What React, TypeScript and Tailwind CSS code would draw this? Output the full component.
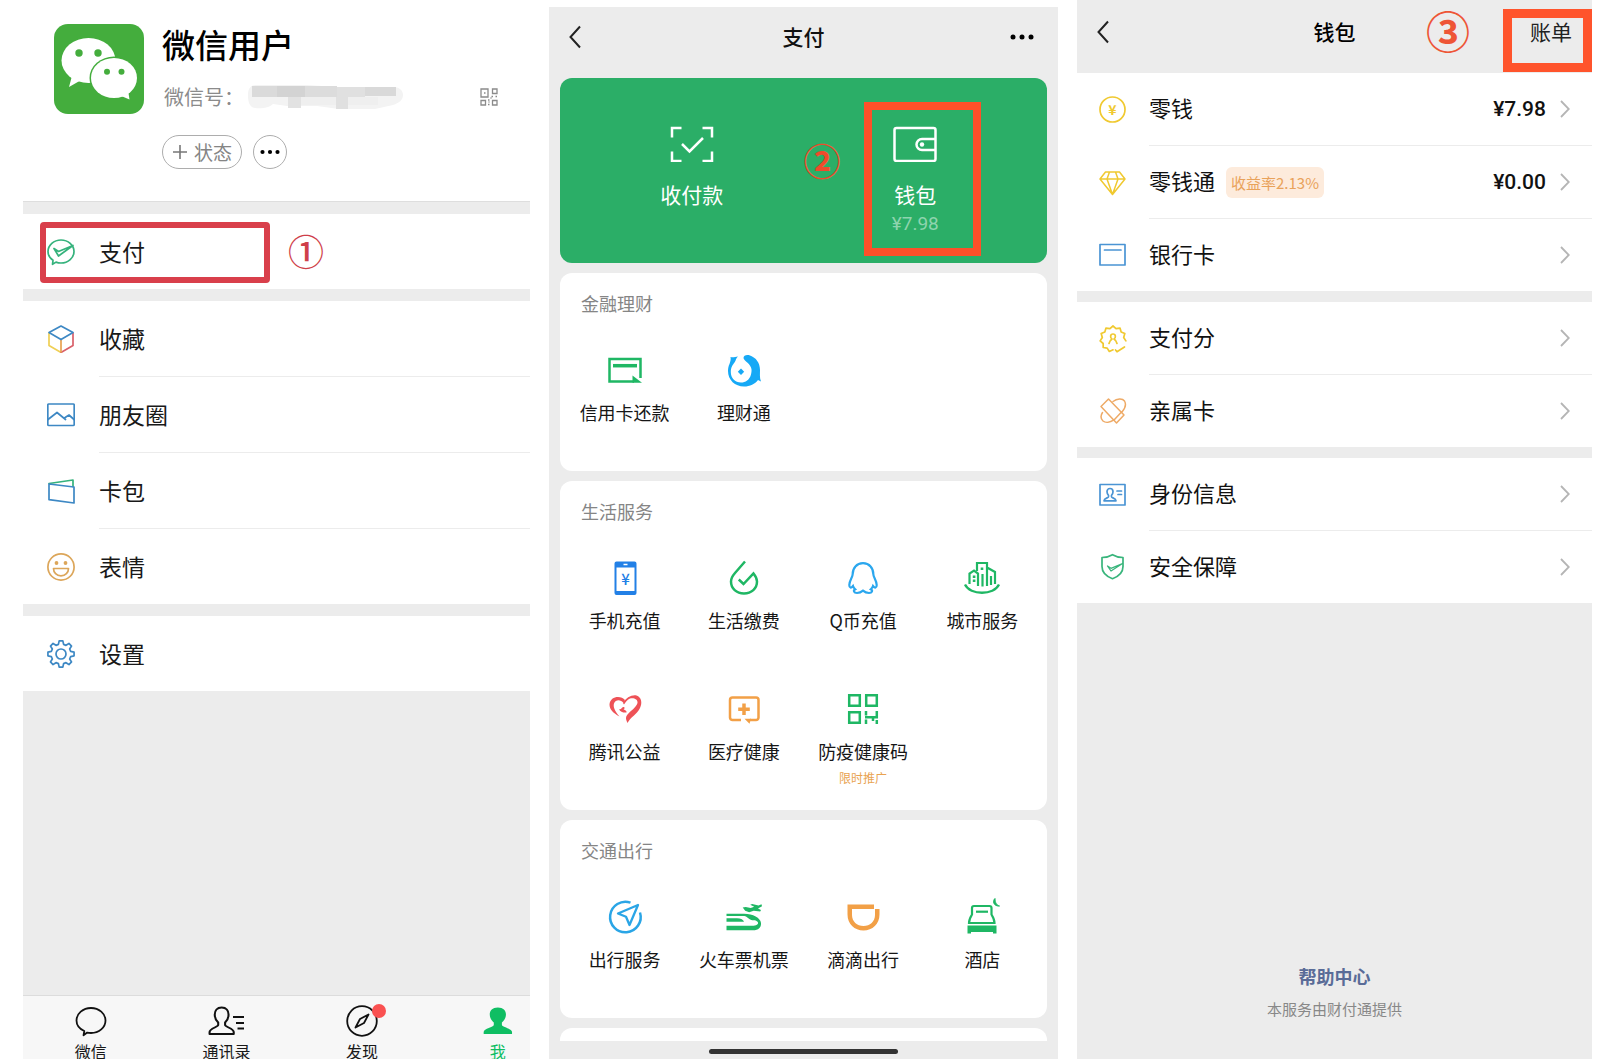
import type { ReactNode } from "react";
import clsx from "clsx";

type IconProps = { children: ReactNode; color?: string; width?: number };

const GREEN = "#1fb764";
const BLUE = "#3d88c4";
const YELLOW = "#f0c930";
const ORANGE = "#f2a047";

// outline icon on a 28px grid, used by the list rows
const RowIcon = ({ children, color = BLUE, width = 1.7 }: IconProps) => (
  <svg
    className="size-7 shrink-0"
    viewBox="0 0 28 28"
    fill="none"
    stroke={color}
    strokeWidth={width}
    strokeLinejoin="round"
    strokeLinecap="round"
    aria-hidden="true"
  >
    {children}
  </svg>
);

// icon on a 40px grid, used by the service tiles
const TileIcon = ({ children, color = GREEN, width = 2.5 }: IconProps) => (
  <svg
    className="size-10 shrink-0"
    viewBox="0 0 40 40"
    fill="none"
    stroke={color}
    strokeWidth={width}
    aria-hidden="true"
  >
    {children}
  </svg>
);

const polar = (r: number, deg: number) => {
  const a = ((deg - 90) * Math.PI) / 180;
  return `${(14 + r * Math.cos(a)).toFixed(2)} ${(14 + r * Math.sin(a)).toFixed(2)}`;
};

const gearPath =
  Array.from({ length: 8 }, (_, i) => {
    const d = i * 45;
    return [polar(10, d - 15), polar(13.2, d - 8), polar(13.2, d + 8), polar(10, d + 15)]
      .map((p, j) => (i === 0 && j === 0 ? `M${p}` : `L${p}`))
      .join(" ");
  }).join(" ") + "Z";

// open seal: the gap at the lower right is closed by a tick
const sealPath = Array.from({ length: 18 }, (_, i) => polar(i % 2 ? 13 : 10.8, 180 + i * 16.36))
  .map((p, i) => (i ? `L${p}` : `M${p}`))
  .join(" ");

const PERSON =
  "M11 2.500c-4 0-6 3-6 7 0 3.500 1.500 6.500 3 8v2.500c0 2-7.500 3.500-7.500 7V29h21v-2c0-3.500-7.500-5-7.500-7v-2.500c1.500-1.500 3-4.500 3-8 0-4-2-7-6-7z";

const WechatLogo = () => (
  <svg className="size-[90px] shrink-0" viewBox="0 0 90 90" aria-hidden="true">
    <rect width="90" height="90" rx="14" fill="#44ad3d" />
    <path d="M18.500 50 15 63l10.500-6z" fill="#fff" />
    <ellipse cx="34.500" cy="36.500" rx="27" ry="22.500" fill="#fff" />
    <ellipse cx="60" cy="54" rx="24.500" ry="21.500" fill="#44ad3d" />
    <path d="M74 66l1.500 9.500-9.500-4z" fill="#fff" />
    <ellipse cx="60" cy="54" rx="23" ry="20" fill="#fff" />
    <g fill="#44ad3d">
      <circle cx="25" cy="29" r="3.700" />
      <circle cx="44" cy="29" r="3.700" />
      <circle cx="53" cy="47.700" r="3" />
      <circle cx="67.500" cy="47.700" r="3" />
    </g>
  </svg>
);

const MaskedId = () => (
  <svg className="ml-[3px] h-[26px] w-[157px]" viewBox="0 0 157 26" aria-hidden="true">
    <path
      d="M1 11C1 4 4 1 9 1H60l30 2h56c6 0 10 3 10 8s-4 8-10 10l-18 4H92l-22-3H40l-14-2c-4 4-12 5-18 4S1 17 1 11z"
      fill="#f3f3f3"
    />
    <path d="M5 2h25v11H5z" fill="#dadada" />
    <path d="M30 2h28v11H30z" fill="#d3d3d3" />
    <path d="M58 2h32v11H58z" fill="#dcdcdc" />
    <path d="M90 3h28v10H90z" fill="#e0e0e0" />
    <path d="M118 3h31v9h-31z" fill="#d9d9d9" />
    <path d="M41 13h13v11H41z" fill="#e2e2e2" />
    <path d="M89 13h12v12H89z" fill="#e0e0e0" />
    <path d="M54 13h35v8H54zM101 13h30v8h-30z" fill="#efefef" />
  </svg>
);

const Back = () => (
  <button type="button" aria-label="返回" className="justify-self-start">
    <svg className="h-6 w-3" viewBox="0 0 12 24" fill="none" stroke="#222" strokeWidth="2" aria-hidden="true">
      <path d="M11 1.500 1.500 12 11 22.500" />
    </svg>
  </button>
);

const Dots = ({ size }: { size: number }) => (
  <svg width={size} height="6" viewBox="0 0 24 6" fill="#000" aria-hidden="true">
    <circle cx="3" cy="3" r="2.500" />
    <circle cx="12" cy="3" r="2.500" />
    <circle cx="21" cy="3" r="2.500" />
  </svg>
);

const ME_GROUPS = [
  [
    {
      title: "支付",
      step: true,
      icon: (
        <RowIcon color="#35b27c">
          <path d="M5.500 26.300l.5-4C3 20.200 1 17 1 13.500 1 7.200 6.800 2 14 2s13 5.200 13 11.500S21.200 25 14 25c-1.800 0-3.500-.3-5-.9z" />
          <path d="M7 10.500l4.500 3L26 7.500 11.500 18z" />
        </RowIcon>
      ),
    },
  ],
  [
    {
      title: "收藏",
      icon: (
        <RowIcon>
          <path d="M2 8v12.500l12 7" stroke="#efcf55" />
          <path d="M26 8v12.500l-12 7" stroke="#d9606a" />
          <path d="M14 15v12" stroke="#e8a150" />
          <path d="M14 1l12 6.500L14 14.500 2 7.500z" />
        </RowIcon>
      ),
    },
    {
      title: "朋友圈",
      icon: (
        <RowIcon>
          <rect x="0.800" y="3" width="26.400" height="21.500" rx="1" />
          <path d="M1 18.500l9-7 8.500 7-1.500-1.200 5-3.300 5 4.500" />
        </RowIcon>
      ),
    },
    {
      title: "卡包",
      icon: (
        <RowIcon>
          <path d="M2 6.500L26 3v6.500" stroke="#35b27c" />
          <path d="M2 7l25 3v16L2 22.700z" />
        </RowIcon>
      ),
    },
    {
      title: "表情",
      icon: (
        <RowIcon color="#dca65a">
          <circle cx="14" cy="14" r="13.100" />
          <path d="M6.500 15.500h15c0 4-3 7.300-7.500 7.300s-7.500-3.300-7.500-7.300z" />
          <g fill="#dca65a" stroke="none">
            <circle cx="9.500" cy="10" r="1.900" />
            <circle cx="18.500" cy="10" r="1.900" />
          </g>
        </RowIcon>
      ),
    },
  ],
  [
    {
      title: "设置",
      icon: (
        <RowIcon>
          <path d={gearPath} />
          <circle cx="14" cy="14" r="5" />
        </RowIcon>
      ),
    },
  ],
];

const TABS = [
  {
    title: "微信",
    icon: (
      <path
        d="M8.500 30.300l.8-4.300C4.300 23.800 1.500 20 1.500 15.500 1.500 8.500 8 3 16 3s14.500 5.500 14.500 12.500S24 28 16 28c-1.500 0-2.500-.1-3.800-.4z"
        fill="none"
        stroke="#111"
        strokeWidth="1.800"
        strokeLinejoin="round"
      />
    ),
  },
  {
    title: "通讯录",
    icon: (
      <g fill="none" stroke="#111" strokeWidth="1.800" strokeLinejoin="round">
        <path d={PERSON} transform="translate(-1 0) scale(1.150 1)" />
        <path d="M23 12h11M26 18h8M27.500 23.500H34" />
      </g>
    ),
  },
  {
    title: "发现",
    icon: (
      <g fill="none" stroke="#111" strokeWidth="1.800" strokeLinejoin="round">
        <circle cx="16" cy="16" r="14.800" />
        <path d="M22.500 9.500L18 18l-8.500 4.500L14 14z" />
      </g>
    ),
    dot: true,
  },
  {
    title: "我",
    active: true,
    icon: <path d={PERSON} transform="translate(1 0) scale(1.350 1)" fill="#0fbe63" />,
  },
];

const FINANCE = [
  {
    title: "信用卡还款",
    icon: (
      <TileIcon>
        <path d="M35.500 28V9H4.500v22.500H29" />
        <path d="M8 15.700h24" strokeWidth="3.500" />
        <path d="M27.500 25.500l9.500 7.200h-9.500z" fill={GREEN} stroke="none" />
      </TileIcon>
    ),
  },
  {
    title: "理财通",
    icon: (
      <TileIcon>
        <g fill="#16a9f6" stroke="none">
          <path d="M14 6.500C11 7 9 7.500 6.500 7c.5 2.500 0 4-1 7C4.500 16 4 18 4 21c0 9 7 15.500 16 15.500 6 0 11-2.500 14-6.500l3 1.500c-1.500-3.500-1-7.500-1-11.500 0-7-4-12.500-10-14.500-3.500-1-6.500 0-6.500 2.500.5 3 5.500 4.500 7.500 9.500 1 2.500.5 4.500 0 7-1.500 5.500-5.500 8-10 8C11 32.500 6.800 28 6.800 22c0-5 2.200-7.500 3.700-9.500S12 8 14 6.500z" />
          <path d="M17 18.500l3.200 3.200-3.200 3.200-3.200-3.200z" />
        </g>
      </TileIcon>
    ),
  },
];

const LIFE = [
  {
    title: "手机充值",
    icon: (
      <TileIcon color="#2280e6">
        <path
          d="M11.500 3.500h18a2 2 0 0 1 2 2v29.500a2 2 0 0 1-2 2h-18a2 2 0 0 1-2-2V5.500a2 2 0 0 1 2-2zM11.500 9.500v23.500h18V9.500z"
          fill="#2280e6"
          fillRule="evenodd"
          stroke="none"
        />
        <path d="M18.500 6.500h4" stroke="#fff" strokeWidth="1.500" />
        <text x="20.500" y="26.500" textAnchor="middle" fontSize="15" fontWeight="500" fill="#2280e6" stroke="none">
          ¥
        </text>
      </TileIcon>
    ),
  },
  {
    title: "生活缴费",
    icon: (
      <TileIcon>
        <path d="M21 3.500L11 15c-3 3.500-4 6-4 8.500 0 7 5.500 12 13 12s13-5 13-12c0-3-1.500-5.500-3.500-8l-10 10.500-4.700-4.500" />
      </TileIcon>
    ),
  },
  {
    title: "Q币充值",
    icon: (
      <TileIcon color="#2ba7ee" width={2.2}>
        <path d="M20 5.200c-6.500 0-10.300 5-10.300 10.800 0 3.500-3.400 6.500-3.400 11 0 3 1.700 3.500 3.700 1 .5 1.500 1.200 2.500 2.200 3.300-2.200 1.200-1.400 3.700 1.800 3.700 2.500 0 4.500-1 6-2.300 1.500 1.300 3.500 2.300 6 2.300 3.200 0 4-2.500 1.800-3.700 1-.8 1.700-1.800 2.200-3.300 2 2.500 3.700 2 3.700-1 0-4.500-3.400-7.500-3.400-11 0-5.800-3.800-10.800-10.300-10.800z" />
      </TileIcon>
    ),
  },
  {
    title: "城市服务",
    icon: (
      <TileIcon width={2.2}>
        <path d="M3 26.500C8 37.500 32 37.500 37 26.500" strokeWidth="2.300" />
        <path d="M7.500 26V15.500l4.500-3 4 3V28M15 13V5h10v23M25 9.500l8 4.500v12M20.500 16v12.500M29 18v9" />
        <g fill={GREEN} stroke="none">
          <path d="M10.800 17.500h2.600v2.400h-2.600zM10.800 21.500h2.600v2.400h-2.600zM18.700 9.500h2.600v2.400h-2.600z" />
        </g>
      </TileIcon>
    ),
  },
  {
    title: "腾讯公益",
    icon: (
      <TileIcon>
        <g fill="#ee5257" stroke="none">
          <path d="M20 11C16 6 5 7 4.500 15.500 4.500 20.500 8 24 14.500 27.500 9.500 22 8 17.500 9 14.500 10.500 10.500 15.500 10 18.500 14z" />
          <path d="M18 14c3-5.500 9-8.500 13.500-7.500 5 1.500 6 7.500 3.500 12.500-3 6.500-9.500 9-12.500 15-2-4-2-6 0-8.500 3-3.500 8.500-7 10-11.500.5-4-4-5.500-7.500-4.500-2.500 1-4.500 3.500-6 6z" />
          <path d="M14 20c2.500 1 3-2.500 5-2 1 .5.500 2-.5 2.300 2 .7 3.500 2 3 3.200-2.500.5-6.500-.5-7.500-3.500z" />
        </g>
      </TileIcon>
    ),
  },
  {
    title: "医疗健康",
    icon: (
      <TileIcon color={ORANGE}>
        <path d="M17 31H8.500A2.500 2.500 0 0 1 6 28.500V11a2.500 2.500 0 0 1 2.500-2.500H32A2.500 2.500 0 0 1 34.500 11v17.500A2.500 2.500 0 0 1 32 31h-6" />
        <path d="M20 14.500v11.500M14.200 20.200h11.600" strokeWidth="3.500" />
        <path d="M20.500 29.800h6.500l-1.500 5z" fill={ORANGE} stroke="none" />
      </TileIcon>
    ),
  },
  {
    title: "防疫健康码",
    note: "限时推广",
    icon: (
      <TileIcon>
        <path d="M6.200 6.200h10.600v10.600H6.200zM23.200 6.200h10.600v10.600H23.200zM6.200 23.200h10.600v10.600H6.200z" />
        <path d="M23 22v4.500M22 28.300h13M23 30.500V35M33.800 22v7M30 28.500v3.500M33.800 31V35" />
      </TileIcon>
    ),
  },
];

const TRAVEL = [
  {
    title: "出行服务",
    icon: (
      <TileIcon color="#2aa5e6">
        <path d="M25.500 5.600A15.300 15.300 0 1 0 35 15.500" />
        <path d="M33 8L13 16.500l8 3.300L24.500 28z" strokeLinejoin="round" strokeWidth="2.300" />
      </TileIcon>
    ),
  },
  {
    title: "火车票机票",
    icon: (
      <TileIcon>
        <g fill={GREEN} stroke="none">
          <path d="M2.500 16.800H20c9 0 16.500 4.200 17 9.200.4 4.500-2.500 7.300-8 7.300H2.500v-4.500H28c4.500 0 6.500-1.500 6-3.300-.5-1-1.500-1.800-3-2.300-2 .5-5-.2-7-2.200l-2-1.500c-1-.5-2-.5-3.500-.5h-16z" />
          <path d="M2.500 21.300H13c4 0 6.500 1.700 7 3.500H2.500z" />
          <path d="M18.700 10.500l3-.5 5 1 3.500-1.300-4-2 2-.8 6.300 1.700 3-1.300.5 2-4 2.300 3 1.400-.8 1.400-6.500-.6-4.500 1.400-4-1.500z" />
        </g>
      </TileIcon>
    ),
  },
  {
    title: "滴滴出行",
    icon: (
      <TileIcon>
        <path
          d="M4.500 7.500H31V12h5.500v5.500C36.500 27 29.500 33.500 20.500 33.500S4.500 27 4.500 17.500zM9 12v6c0 6.500 5 11 11.500 11S32 24.500 32 18v-6z"
          fill={ORANGE}
          fillRule="evenodd"
          stroke="none"
        />
      </TileIcon>
    ),
  },
  {
    title: "酒店",
    icon: (
      <TileIcon width={2.2}>
        <path d="M7 26c0-3 1.500-6 3-8.500V11a2 2 0 0 1 2-2h15.500a2 2 0 0 1 2 2v6.500c1.500 2.500 3 5.500 3 8.500z" />
        <path d="M14 14.700h12" />
        <g fill={GREEN} stroke="none">
          <path d="M5.500 28.500h29v8H31V35H9v1.500H5.500z" />
          <path d="M33 1.500c-2.500 2-2 8 4.500 7.500-2.500-.5-4.500-3-4.500-7.500z" strokeWidth="1" stroke={GREEN} />
        </g>
      </TileIcon>
    ),
  },
];

const WALLET_GROUPS = [
  [
    {
      title: "零钱",
      amount: "¥7.98",
      icon: (
        <RowIcon color={YELLOW}>
          <circle cx="13.500" cy="13.500" r="12.500" />
          <text x="13.500" y="18.500" textAnchor="middle" fontSize="14" fontWeight="700" fill={YELLOW} stroke="none">
            ¥
          </text>
        </RowIcon>
      ),
    },
    {
      title: "零钱通",
      badge: "收益率2.13%",
      amount: "¥0.00",
      icon: (
        <RowIcon color={YELLOW} width={1.5}>
          <path d="M6.500 3h14l5.500 7L13.500 25.500 1 10zM1 10h25M10.500 3L8 10l5.500 15.500L19 10l-2.500-7" />
        </RowIcon>
      ),
    },
    {
      title: "银行卡",
      icon: (
        <RowIcon color="#4a94d4">
          <path d="M1 3.500h25v20.500H1zM5.500 9h16.500" />
        </RowIcon>
      ),
    },
  ],
  [
    {
      title: "支付分",
      icon: (
        <RowIcon color={YELLOW}>
          <path d={sealPath} />
          <path d="M16.500 25l1.500 1.800 7.500-4.800" />
          <path d="M10 18.500c.5-2.500 1.500-3.500 3-4.500-2-1-2-5 1-5s3 4 1 5c1.500 1 2.500 2 3 4.500" />
        </RowIcon>
      ),
    },
    {
      title: "亲属卡",
      icon: (
        <RowIcon color="#eeaa66" width={1.5}>
          <path d="M9.500 2L2 9.500 17.500 26l7.500-8zM14.800 23.200l7.700-8.200" />
          <path d="M14 4.500c4-3 9.500-3.200 11.500-.5 2 3.500.5 7.500-2.500 11M3.500 15.500C1.500 18.500 2 22 4 24c2.500 2 7 1.500 10.500-.8" />
        </RowIcon>
      ),
    },
  ],
  [
    {
      title: "身份信息",
      icon: (
        <RowIcon color="#4a94d4">
          <path d="M1 3.500h25v20.500H1z" />
          <path d="M11 7.500c-2 0-3 1.500-3 3.300 0 1.700.7 2.700 1.500 3.500v1.500c0 1-4.500 1.500-4.500 4h12c0-2.500-4.500-3-4.500-4v-1.500c.8-.8 1.500-1.800 1.500-3.500C14 9 13 7.500 11 7.500zM18 10h4.500M19 13.500h3.500" />
        </RowIcon>
      ),
    },
    {
      title: "安全保障",
      icon: (
        <RowIcon color="#39b57c">
          <path d="M13.500 1.700C16.500 3.500 20 4.500 24 4.500v9c0 6-4.500 10-10.500 12.200C7.500 23.500 3 19.500 3 13.500v-9c4 0 7.500-1 10.500-2.800z" />
          <path d="M8.500 13l3.500 2.300 11.500-4.800L12 18z" strokeWidth="1.300" />
        </RowIcon>
      ),
    },
  ],
];

type Service = { title: string; icon: ReactNode; note?: string };

const ServiceCard = ({ title, items }: { title: string; items: Service[] }) => (
  <section className="rounded-xl bg-white px-[5px] pb-[25px] pt-[19px]">
    <h2 className="mb-px px-4 text-lg leading-[22px] text-[#858585]">{title}</h2>
    <div className="grid grid-cols-4">
      {items.map((item) => (
        <button key={item.title} type="button" className="flex min-h-[131px] flex-col items-center pt-[35px]">
          {item.icon}
          <span className="mt-[10px] whitespace-nowrap text-lg leading-6 text-[#161616]">{item.title}</span>
          {item.note && <span className="mt-2 text-[12px] leading-[14px] text-[#e9a351]">{item.note}</span>}
        </button>
      ))}
    </div>
  </section>
);

const MePage = () => (
  <section className="flex min-h-0 flex-col overflow-hidden bg-[#ececec]">
    <header className="flex gap-[18px] border-b border-[#dedede] bg-white pb-8 pl-[31px] pr-8 pt-6">
      <WechatLogo />
      <div className="flex flex-1 flex-col items-start">
        <h1 className="text-[33px] font-medium leading-10 text-black">微信用户</h1>
        <div className="mt-[11px] flex w-full items-center pl-[2px] text-xl leading-[44px] text-[#8b8b8b]">
          <span>微信号：</span>
          <MaskedId />
          <svg
            className="ml-auto size-[18px]"
            viewBox="0 0 18 18"
            fill="none"
            stroke="#8b8b8b"
            strokeWidth="1.300"
            aria-hidden="true"
          >
            <path d="M1 1h7v8H1zM12.500 1H17v4.500h-4.500zM1 12.500h4.500V17H1zM12.500 12.500H17V17h-4.500z" />
            <path d="M4 5h1.500M11.500 8.500H13M15.500 8.500H17M8 12h1.500M8 16.500h1.500M11 9.500v1M8.500 14h1" strokeWidth="1.600" />
          </svg>
        </div>
        <div className="mt-4 flex items-center gap-[11px]">
          <button
            type="button"
            className="flex h-[34px] items-center gap-[6px] rounded-full border border-[#adadad] px-[9px] text-[19px] leading-6 text-[#858585]"
          >
            <svg className="size-4" viewBox="0 0 16 16" stroke="#777" strokeWidth="1.600" aria-hidden="true">
              <path d="M8 1v14M1 8h14" />
            </svg>
            状态
          </button>
          <button
            type="button"
            aria-label="更多"
            className="flex size-[34px] items-center justify-center rounded-full border border-[#adadad]"
          >
            <Dots size={20} />
          </button>
        </div>
      </div>
    </header>
    <div className="flex flex-col gap-3 pt-3">
      {ME_GROUPS.map((group) => (
        <div key={group[0].title} className="bg-white">
          {group.map((row, index) => (
            <div key={row.title} className="relative flex">
              <button type="button" className="flex flex-1 items-center gap-6 pl-6 text-left">
                {row.icon}
                <span
                  className={clsx("flex h-[75px] flex-1 items-center text-[23px] text-[#191919]", {
                    "box-content border-b border-[#ececec]": index < group.length - 1,
                  })}
                >
                  {row.title}
                </span>
              </button>
              {"step" in row && (
                <>
                  <span className="pointer-events-none absolute left-[17px] top-2 h-[61px] w-[230px] rounded-sm border-6 border-[#d93f4b]" />
                  <span className="absolute left-[265px] top-[14px] text-[36px] font-medium leading-[44px] text-[#cf3f4a]">
                    ①
                  </span>
                </>
              )}
            </div>
          ))}
        </div>
      ))}
    </div>
    <nav className="mt-auto h-16 shrink-0 overflow-hidden border-t border-[#dcdcdc] bg-[#f7f7f7]">
      <div className="grid w-[107%] grid-cols-4">
        {TABS.map((tab) => (
          <a key={tab.title} href="#" className="flex flex-col items-center gap-[6px] pt-[9px]">
            <span className="relative">
              <svg className="size-8 overflow-visible" viewBox="0 0 32 32" aria-hidden="true">
                {tab.icon}
              </svg>
              {tab.dot && <span className="absolute -right-2 -top-px size-[14px] rounded-full bg-[#fa5151]" />}
            </span>
            <span className={clsx("text-base leading-4", tab.active ? "text-[#0fbe63]" : "text-[#191919]")}>
              {tab.title}
            </span>
          </a>
        ))}
      </div>
    </nav>
  </section>
);

const PayPage = () => (
  <section className="mt-[7px] flex min-h-0 flex-col overflow-hidden bg-[#ececec]">
    <header className="mb-[11px] grid h-[60px] shrink-0 grid-cols-[1fr_auto_1fr] items-center px-5">
      <Back />
      <h1 className="text-[21px] font-medium text-[#111]">支付</h1>
      <button type="button" aria-label="更多" className="justify-self-end pr-1">
        <Dots size={24} />
      </button>
    </header>
    <div className="flex min-h-0 flex-1 flex-col gap-[10px] overflow-hidden px-[11px]">
      <section className="grid shrink-0 grid-cols-2 rounded-xl bg-[#2bae67] px-5 text-[21px] leading-6 text-white">
        <button type="button" className="flex flex-col items-center pb-[27px] pt-12">
          <svg className="h-9 w-11" viewBox="0 0 44 36" fill="none" stroke="#fff" strokeWidth="2.500" aria-hidden="true">
            <path d="M11.500 2H2v9.500M32.500 2H42v9.500M11.500 35H2v-9.500M32.500 35H42v-9.500M12 18l7.500 7.500L33 12" />
          </svg>
          <span className="mt-5">收付款</span>
        </button>
        <div className="relative flex flex-col">
          <button type="button" className="flex flex-col items-center pb-[27px] pt-12">
            <svg className="h-9 w-11" viewBox="0 0 44 36" fill="none" stroke="#fff" strokeWidth="2.500" aria-hidden="true">
              <rect x="1.500" y="2" width="41" height="33" rx="2" />
              <path d="M42.500 13H29a5.500 5.500 0 0 0 0 11h13.500" />
              <circle cx="29" cy="18.500" r="2.200" fill="#fff" stroke="none" />
            </svg>
            <span className="mt-5">钱包</span>
            <span className="mt-[6px] font-[Roboto,sans-serif] text-[19px] text-[#8ed4ae]">¥7.98</span>
          </button>
          <span className="pointer-events-none absolute left-[60px] top-6 h-[154px] w-[117px] border-8 border-[#fe5029]" />
          <span className="absolute left-0 top-[60px] text-[37px] font-bold leading-[44px] text-[#ee4b2b]">②</span>
        </div>
      </section>
      <ServiceCard title="金融理财" items={FINANCE} />
      <ServiceCard title="生活服务" items={LIFE} />
      <ServiceCard title="交通出行" items={TRAVEL} />
      <div className="h-16 shrink-0 rounded-xl bg-white" />
    </div>
    <div className="flex h-[18px] shrink-0 items-center justify-center pt-[3px]">
      <span className="h-[5px] w-[189px] rounded-full bg-[#333]" />
    </div>
  </section>
);

const WalletPage = () => (
  <section className="flex min-h-0 flex-col overflow-hidden bg-[#ececec]">
    <header className="relative grid h-[73px] shrink-0 grid-cols-[1fr_auto_1fr] items-center px-5 pb-[9px] text-[21px]">
      <Back />
      <h1 className="font-medium text-black">钱包</h1>
      <div className="flex items-center justify-end gap-[60px]">
        <span className="pb-1 text-[44px] font-bold leading-[46px] text-[#ee5536]">③</span>
        <button type="button" className="text-[#222]">
          账单
        </button>
      </div>
      <span className="pointer-events-none absolute right-0 top-[9px] h-[63px] w-[89px] border-[9px] border-[#ff542c]" />
    </header>
    <div className="flex flex-col gap-[11px]">
      {WALLET_GROUPS.map((group) => (
        <div key={group[0].title} className="bg-white">
          {group.map((row, index) => (
            <button key={row.title} type="button" className="flex w-full items-center gap-[22px] pl-[22px] text-left">
              {row.icon}
              <span
                className={clsx("flex h-[72px] flex-1 items-center pr-[22px] text-[22px] text-[#111]", {
                  "box-content border-b border-[#ececec]": index < group.length - 1,
                })}
              >
                <span className="pb-[3px]">{row.title}</span>
                {"badge" in row && (
                  <span className="ml-[11px] rounded-md bg-[#fdebdc] px-[5px] text-[15px] leading-[31px] text-[#e9a25a]">
                    {row.badge}
                  </span>
                )}
                {"amount" in row && (
                  <span className="ml-auto mr-[14px] pt-[2px] font-[Roboto,sans-serif] text-[21px] font-medium">
                    {row.amount}
                  </span>
                )}
                <svg
                  className={clsx("h-[18px] w-[10px]", { "ml-auto": !("amount" in row) })}
                  viewBox="0 0 10 18"
                  fill="none"
                  stroke="#b5b5b5"
                  strokeWidth="1.800"
                  aria-hidden="true"
                >
                  <path d="M1 1l7.800 8L1 17" />
                </svg>
              </span>
            </button>
          ))}
        </div>
      ))}
    </div>
    <footer className="mt-auto flex flex-col items-center gap-[11px] pb-10">
      <a href="#" className="text-lg font-bold leading-6 text-[#5a6c98]">
        帮助中心
      </a>
      <p className="text-[15px] leading-5 text-[#888]">本服务由财付通提供</p>
    </footer>
  </section>
);

export default function App() {
  return (
    <main
      lang="zh-CN"
      className="grid h-screen grid-cols-[507fr_509fr_515fr] grid-rows-[minmax(0,1fr)] gap-x-[19px] overflow-hidden bg-white pl-[23px] pr-2 font-['Noto_Sans_CJK_SC',sans-serif]"
    >
      <MePage />
      <PayPage />
      <WalletPage />
    </main>
  );
}
